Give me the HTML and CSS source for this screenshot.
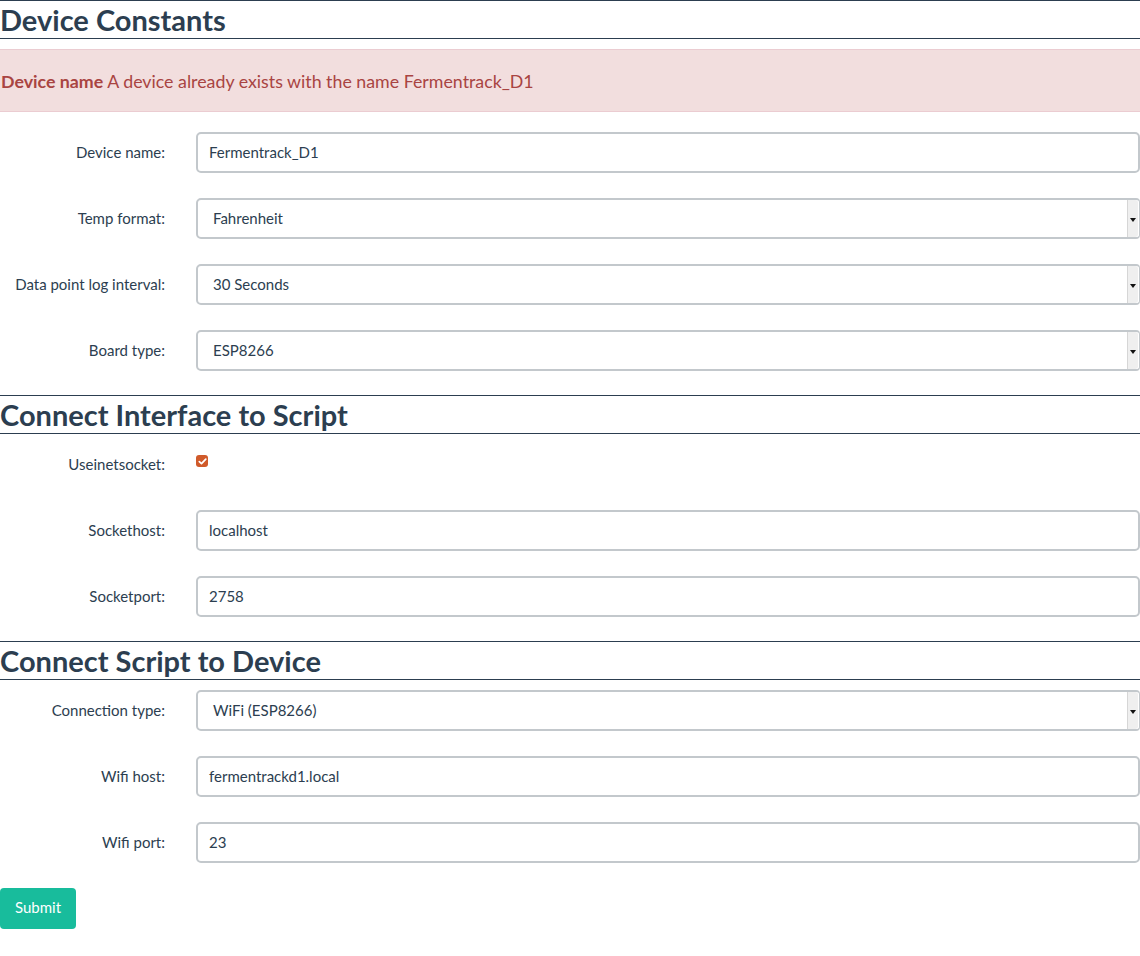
FILE: index.html
```html
<!DOCTYPE html>
<html>
<head>
<meta charset="utf-8">
<link rel="stylesheet" href="styles.css">
</head>
<body>
<form class="page">
  <h2 class="section-title">Device Constants</h2>
  <div class="alert"><strong>Device name</strong> A device already exists with the name Fermentrack_D1</div>

  <div class="row">
    <label class="label">Device name:</label>
    <div class="field"><div class="input">Fermentrack_D1</div></div>
  </div>
  <div class="row">
    <label class="label">Temp format:</label>
    <div class="field"><div class="select"><span class="select-text">Fahrenheit</span><span class="arrow"><span class="tri"></span></span></div></div>
  </div>
  <div class="row">
    <label class="label">Data point log interval:</label>
    <div class="field"><div class="select"><span class="select-text">30 Seconds</span><span class="arrow"><span class="tri"></span></span></div></div>
  </div>
  <div class="row">
    <label class="label">Board type:</label>
    <div class="field"><div class="select"><span class="select-text">ESP8266</span><span class="arrow"><span class="tri"></span></span></div></div>
  </div>

  <h2 class="section-title">Connect Interface to Script</h2>
  <div class="row">
    <label class="label">Useinetsocket:</label>
    <div class="field check-field">
      <span class="checkbox"><svg width="11" height="11" viewBox="0 0 11 11"><path d="M2.3 5.6 L4.5 7.7 L8.8 3.2" fill="none" stroke="#fff" stroke-width="1.7" stroke-linecap="round" stroke-linejoin="round"/></svg></span>
    </div>
  </div>
  <div class="row">
    <label class="label">Sockethost:</label>
    <div class="field"><div class="input">localhost</div></div>
  </div>
  <div class="row">
    <label class="label">Socketport:</label>
    <div class="field"><div class="input">2758</div></div>
  </div>

  <h2 class="section-title">Connect Script to Device</h2>
  <div class="row">
    <label class="label">Connection type:</label>
    <div class="field"><div class="select"><span class="select-text">WiFi (ESP8266)</span><span class="arrow"><span class="tri"></span></span></div></div>
  </div>
  <div class="row">
    <label class="label">Wifi host:</label>
    <div class="field"><div class="input">fermentrackd1.local</div></div>
  </div>
  <div class="row">
    <label class="label">Wifi port:</label>
    <div class="field"><div class="input">23</div></div>
  </div>

  <button type="button" class="btn">Submit</button>
</form>
</body>
</html>
```

FILE: styles.css
```css
html, body {
  margin: 0;
  padding: 0;
  background: #ffffff;
}
body {
  font-family: "Lato", "Liberation Sans", sans-serif;
  font-size: 15px;
  line-height: 21px;
  color: #2c3e50;
}
.page {
  width: 1140px;
  display: flex;
  flex-direction: column;
}
.section-title {
  margin: -1px 0 10px 0;
  border-top: 1px solid #2c3e50;
  border-bottom: 1px solid #2c3e50;
  font-size: 29px;
  font-weight: 700;
  line-height: 38px;
  height: 37px;
  color: #2c3e50;
}
.section-title:first-child {
  margin-top: 0;
}
.alert {
  background: #f2dede;
  border-top: 1px solid #ebccd1;
  border-bottom: 1px solid #ebccd1;
  color: #a94442;
  padding: 21px 0 19px 1px;
  font-size: 17.8px;
  line-height: 21px;
  margin-bottom: 20px;
}
.alert strong {
  font-weight: 700;
}
.row {
  display: grid;
  grid-template-columns: 196px 1fr;
  margin-bottom: 25px;
  min-height: 41px;
}
.label {
  text-align: right;
  padding: 10px 31px 0 0;
  font-size: 15px;
  line-height: 21px;
  color: #2c3e50;
}
.field {
  display: flex;
}
.input, .select {
  box-sizing: border-box;
  width: 944px;
  height: 41px;
  border: 2px solid #c3c8cc;
  border-radius: 5px;
  background: #fff;
  font-size: 15px;
  color: #2c3e50;
  display: flex;
  align-items: center;
}
.input {
  padding-left: 11px;
}
.select {
  padding-left: 15px;
  border-right-width: 1px;
  border-radius: 5px 4px 4px 5px;
}
.select-text {
  flex: 1;
}
.arrow {
  box-sizing: border-box;
  width: 11px;
  height: 37px;
  margin-right: 1px;
  background: #efefef;
  border-left: 1px solid #d6d6d6;
  border-radius: 0 3px 3px 0;
  display: flex;
  align-items: center;
  justify-content: center;
}
.tri {
  width: 0;
  height: 0;
  border-left: 3px solid transparent;
  border-right: 3px solid transparent;
  border-top: 4px solid #111;
  margin-top: 2px;
}
.check-field {
  padding-top: 11px;
}
.checkbox {
  width: 12px;
  height: 12px;
  box-sizing: border-box;
  background: #d05a2a;
  border-radius: 3px;
  display: flex;
  align-items: center;
  justify-content: center;
}
.checkbox svg {
  display: block;
}
.btn {
  align-self: flex-start;
  margin: 0;
  border: none;
  background: #18bc9c;
  color: #ffffff;
  font-family: "Lato", "Liberation Sans", sans-serif;
  font-size: 15px;
  line-height: 20px;
  padding: 8px 15px 12px;
  border-radius: 4px;
  height: 41px;
}
```
